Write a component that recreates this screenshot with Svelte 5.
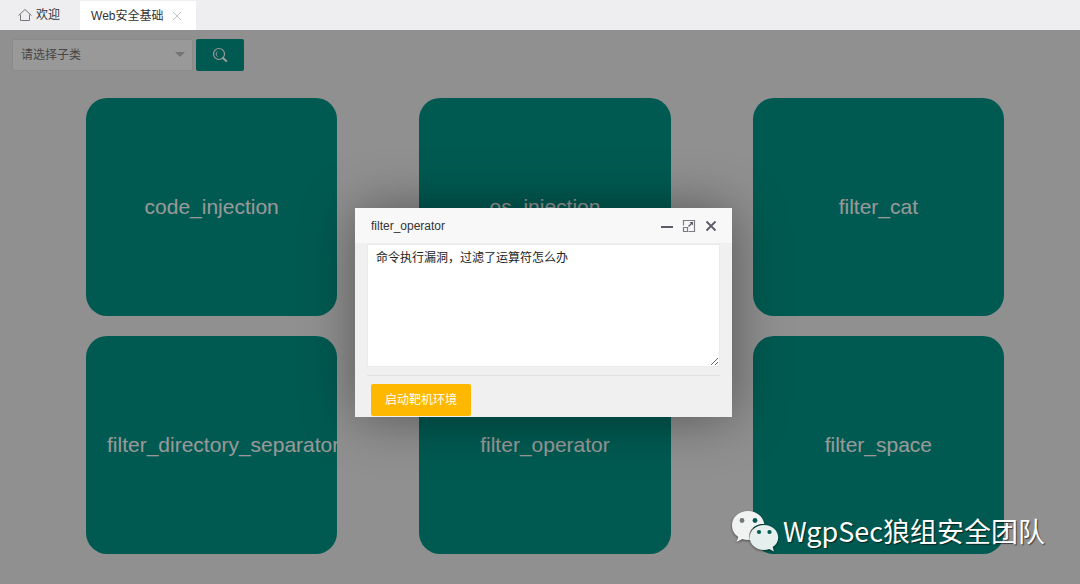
<script>
  const cards = [
    'code_injection',
    'os_injection',
    'filter_cat',
    'filter_directory_separator',
    'filter_operator',
    'filter_space'
  ];
  let note = $state('命令执行漏洞，过滤了运算符怎么办');
</script>

<div class="page">
  <nav class="tabs" aria-label="标签页">
    <button class="tab home" type="button">
      <svg width="14" height="14" viewBox="0 0 14 14" fill="none" stroke="#777" aria-hidden="true">
        <path d="M.5 7.500 7 1.500l6.500 6M2.500 6.500v6h9v-6" />
      </svg>
      <span>欢迎</span>
    </button>
    <div class="tab active">
      <button class="name" type="button">Web安全基础</button>
      <button class="x" type="button" aria-label="关闭标签">
        <svg width="10" height="10" viewBox="0 0 10 10" stroke="#c2c2c2" aria-hidden="true">
          <path d="m1 1 8 8M9 1 1 9" />
        </svg>
      </button>
    </div>
  </nav>

  <main>
    <form class="search" onsubmit={(e) => e.preventDefault()}>
      <div class="select">
        <select aria-label="子类">
          <option>请选择子类</option>
        </select>
      </div>
      <button type="submit" aria-label="搜索">
        <svg width="16" height="16" viewBox="0 0 16 16" fill="none" stroke="#fff" aria-hidden="true">
          <circle cx="7" cy="7" r="5.500" stroke-width="1.200" />
          <path d="M5.500 9.500A3 3 0 0 1 5.500 4.500" />
          <path d="m11 11 3.200 3" stroke-width="2.200" stroke-linecap="round" />
        </svg>
      </button>
    </form>

    <div class="grid">
      {#each cards as card}
        <div class="cell"><button class="card" type="button"><span>{card}</span></button></div>
      {/each}
    </div>
    <div class="shade"></div>
  </main>

  <div class="dialog" role="dialog" aria-labelledby="dialog-title">
    <header>
      <h2 id="dialog-title">filter_operator</h2>
      <button type="button" aria-label="最小化">
        <svg width="14" height="14" viewBox="0 0 14 14" aria-hidden="true">
          <path d="M1 8h12" stroke="#5c5c68" stroke-width="2" />
        </svg>
      </button>
      <button type="button" aria-label="最大化">
        <svg width="14" height="14" viewBox="0 0 14 14" fill="none" stroke="#7c7c84" aria-hidden="true">
          <path d="M1.500 6.500v-5h11v11h-6M1.500 8.500h4v4h-4z" stroke-width="1.200" />
          <path d="m6.500 7.500 4-4" stroke="#5c5c68" stroke-width="1.200" />
          <path d="M7.500 3h3.500v3.500z" fill="#5c5c68" stroke="none" />
        </svg>
      </button>
      <button type="button" aria-label="关闭">
        <svg width="14" height="14" viewBox="0 0 14 14" stroke="#5c5c68" stroke-width="1.800" aria-hidden="true">
          <path d="m2.500 2.500 9 9M11.500 2.500l-9 9" />
        </svg>
      </button>
    </header>
    <div class="body">
      <textarea aria-label="题目描述" bind:value={note}></textarea>
      <hr />
      <button class="start" type="button">启动靶机环境</button>
    </div>
  </div>

  <div class="mark">
    <svg width="48" height="42" viewBox="0 0 48 42" aria-hidden="true">
      <path
        fill="#f1f2f2"
        d="M17 1C7.600 1 1 7.400 1 15.500c0 4.800 2.400 8.800 6.300 11.400L5.500 32l5.900-3c2.300.8 4.700 1.100 7.700.8C16 21 23.500 13.500 33.300 14.100 32 6.500 25.600 1 17 1z"
      />
      <path
        fill="#e5efed"
        d="M33 15c-8.200 0-14.300 5.600-14.300 12.500S24.800 40 33 40c1.900 0 3.600-.3 5.200-.9l4.700 2.300-1.200-4.300c3.400-2.200 5.500-5.700 5.500-9.600C47.200 20.600 41.200 15 33 15z"
      />
      <circle cx="11" cy="10.500" r="2.400" fill="#6f7a78" />
      <g fill="#005a52">
        <circle cx="24" cy="10.500" r="2.400" />
        <circle cx="28" cy="22" r="2.100" />
        <circle cx="38.500" cy="22" r="2.100" />
      </g>
    </svg>
    <span>WgpSec狼组安全团队</span>
  </div>
</div>

<style>
  :global(body) {
    margin: 0;
    background: #f0f0f0;
  }
  .page {
    display: flex;
    flex-direction: column;
    min-height: 100vh;
    font: 12px/18px 'Liberation Sans', 'Noto Sans CJK SC', sans-serif;
    color: #333;
  }
  button {
    font: inherit;
    color: inherit;
    border: 0;
    padding: 0;
    background: none;
    cursor: pointer;
  }
  svg {
    display: block;
  }
  .tabs {
    display: flex;
    height: 30px;
    background: #eeeef0;
  }
  .tab {
    display: flex;
    align-items: center;
  }
  .home {
    gap: 4px;
    padding: 0 20px 0 18px;
  }
  .active {
    gap: 9px;
    margin-top: 1px;
    padding: 0 14px 0 11px;
    background: #fff;
  }
  main {
    position: relative;
    flex: 1;
    padding-bottom: 30px;
  }
  .shade {
    position: absolute;
    inset: 0;
    background: rgba(0, 0, 0, 0.4);
  }
  .search {
    display: flex;
    gap: 3px;
    padding: 9px 12px 0;
  }
  .select {
    position: relative;
    width: 181px;
  }
  .select::after {
    content: '';
    position: absolute;
    right: 8px;
    top: 13px;
    border: 5px solid transparent;
    border-top-color: #c2c2c2;
    pointer-events: none;
  }
  select {
    appearance: none;
    width: 100%;
    height: 32px;
    padding: 0 8px;
    border: 1px solid #e6e6e6;
    border-radius: 2px;
    background: #fff;
    color: #757575;
    font: inherit;
  }
  .search button {
    display: grid;
    place-items: center;
    width: 48px;
    height: 32px;
    border-radius: 2px;
    background: #009688;
  }
  .grid {
    display: grid;
    grid-template-columns: repeat(3, 1fr);
    row-gap: 20px;
    padding: 27px 35px 0 45px;
  }
  .cell {
    min-width: 0;
    padding: 0 41px;
  }
  .card {
    display: block;
    width: 100%;
    height: 218px;
    padding: 0 21px;
    border-radius: 21px;
    background: #009688;
    color: #fff;
    font-size: 21px;
    line-height: 24px;
  }
  .card span {
    display: block;
    text-align: center;
    white-space: nowrap;
  }
  .dialog {
    position: absolute;
    left: calc(50% - 185px);
    top: 208px;
    width: 377px;
    background: #f0f0f0;
    box-shadow: 1px 1px 50px rgba(0, 0, 0, 0.4);
  }
  header {
    display: flex;
    align-items: center;
    gap: 8px;
    height: 35px;
    padding: 0 14px 0 16px;
    background: #f8f8f8;
    border-bottom: 1px solid #eee;
  }
  h2 {
    flex: 1;
    margin: 0;
    font-size: 12px;
    font-weight: 400;
  }
  .body {
    padding: 0 12px 1px;
  }
  textarea {
    display: block;
    box-sizing: border-box;
    width: 100%;
    height: 123px;
    padding: 4px 8px;
    border: 1px solid #ebebeb;
    background: #fff;
    color: #222;
    font: inherit;
    resize: vertical;
  }
  hr {
    margin: 8px 0;
    border: 0;
    border-top: 1px solid #e2e2e2;
  }
  .start {
    display: block;
    height: 32px;
    margin-left: 4px;
    padding: 0 14px;
    border-radius: 2px;
    background: #ffb800;
    color: #fff;
  }
  .mark {
    position: absolute;
    right: 35px;
    bottom: 32px;
    display: flex;
    align-items: center;
    gap: 4px;
    color: #fff;
    font: 27px/42px 'Noto Sans CJK SC', sans-serif;
    text-shadow: 1px 1px 1px rgba(0, 0, 0, 0.6);
    white-space: nowrap;
    pointer-events: none;
  }
  .mark svg {
    filter: drop-shadow(0 1px 1px rgba(0, 0, 0, 0.5));
  }
</style>
